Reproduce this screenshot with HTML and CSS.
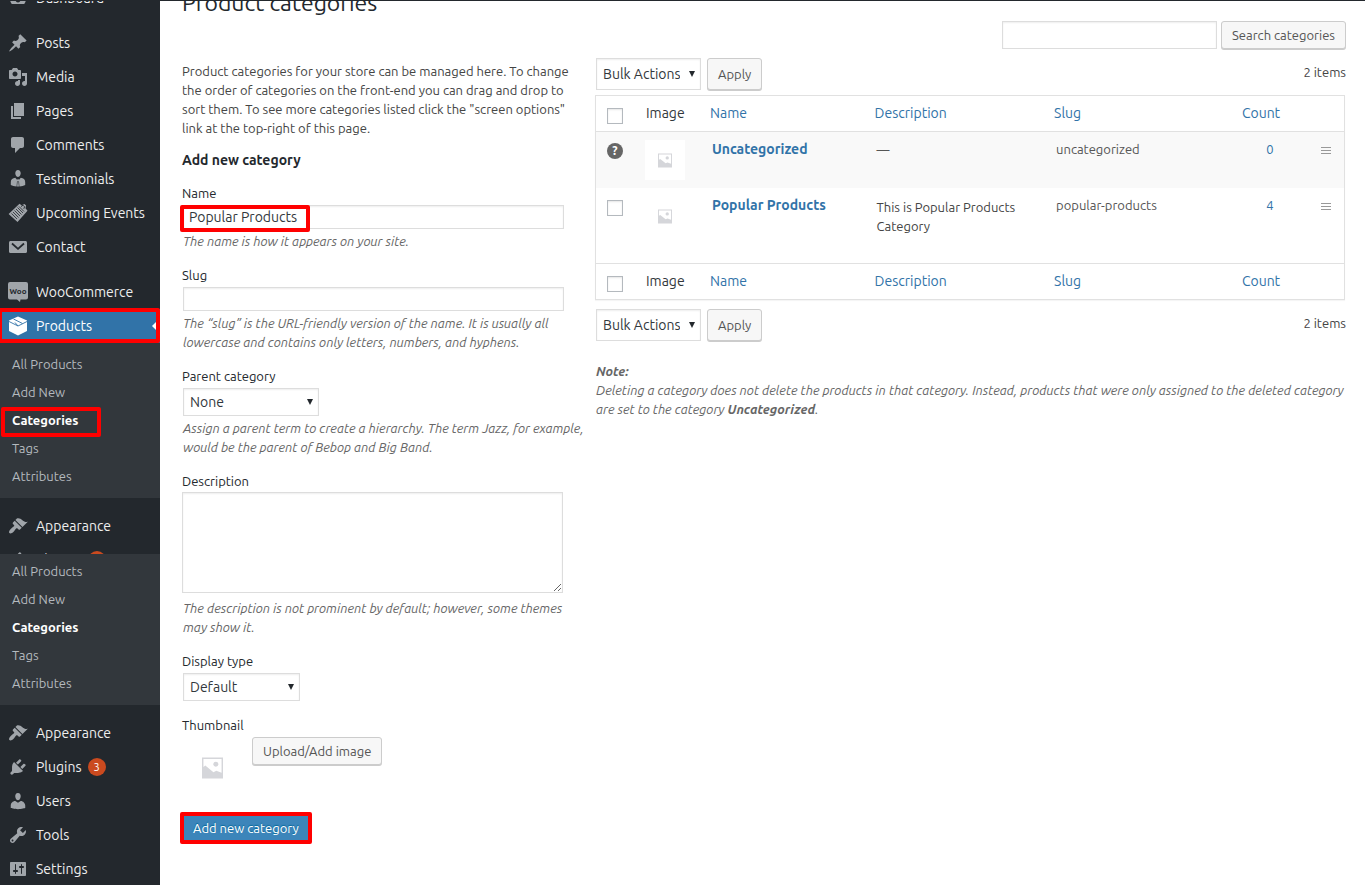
FILE: index.html
```html
<!DOCTYPE html>
<html lang="en">
<head>
  <meta charset="UTF-8" />
  <meta name="viewport" content="width=device-width, initial-scale=1.0"/>
  <title>Product categories</title>
  <link rel="stylesheet" href="styles.css">
</head>
<body>
  <!-- shared icons -->
  <svg class="sprite" width="0" height="0">
    <symbol id="i-dashboard" viewBox="0 0 20 20"><path d="M3.76 16h12.48c1.1-1.37 1.76-3.11 1.76-5 0-4.42-3.58-8-8-8s-8 3.58-8 8c0 1.89.66 3.63 1.76 5z"/><circle cx="10" cy="12" r="2.4" fill="#23282d"/></symbol>
    <symbol id="i-post" viewBox="0 0 20 20"><path d="M10.44 3.02l1.82-1.82 6.36 6.35-1.83 1.82c-1.05-.68-2.48-.57-3.41.36l-.75.75c-.92.93-1.04 2.35-.35 3.41l-1.83 1.82-2.41-2.41-2.8 2.79c-.42.42-3.38 2.71-3.8 2.29s1.86-3.39 2.28-3.81l2.79-2.79L4.1 9.36l1.83-1.82c1.05.69 2.48.57 3.4-.36l.75-.75c.93-.92 1.05-2.35.36-3.41z"/></symbol>
    <symbol id="i-media" viewBox="0 0 20 20"><path d="M13 11V4c0-.55-.45-1-1-1h-1.67L9 1H5L3.67 3H2c-.55 0-1 .45-1 1v7c0 .55.45 1 1 1h10c.55 0 1-.45 1-1zM7 4.5c1.38 0 2.5 1.12 2.5 2.5S8.38 9.5 7 9.5 4.5 8.38 4.5 7 5.62 4.5 7 4.5zM14 6h5v10.5c0 1.38-1.12 2.5-2.5 2.5S14 17.88 14 16.5s1.12-2.5 2.5-2.5c.17 0 .34.02.5.05V9h-3V6zm-4 8.05V13h2v3.5c0 1.38-1.12 2.5-2.5 2.5S7 17.88 7 16.5 8.12 14 9.5 14c.17 0 .34.02.5.05z"/></symbol>
    <symbol id="i-page" viewBox="0 0 20 20"><path d="M6 15V2h10v13H6zm-1 1h8v2H3V5h2v11z"/></symbol>
    <symbol id="i-comment" viewBox="0 0 20 20"><path d="M5 2h9c1.1 0 2 .9 2 2v7c0 1.1-.9 2-2 2h-2l-5 5v-5H5c-1.1 0-2-.9-2-2V4c0-1.1.9-2 2-2z"/></symbol>
    <symbol id="i-business" viewBox="0 0 20 20"><path d="M10 8C8 8 7.3 5.300 7.300 4.300 7.300 2.300 8.300 1 10 1s2.700 1.300 2.700 3.300C12.700 5.300 12 8 10 8zM7.300 8.800L9.200 11l.5-1h.7l.5 1 1.900-2.200c2.600.2 4.400 1.900 4.400 4.200v3c-1.500.9-3.500 1.400-5.800 1.500L11 12.500h-2l-.4 5c-2.300-.1-4.300-.6-5.800-1.500v-3c0-2.300 1.900-4 4.500-4.200zM9.500 13h1l.4 4.500H9.100z"/></symbol>
    <symbol id="i-ticket" viewBox="0 0 20 20"><path d="M.6 11L11.500.8l2 1.400 3-1.200 1.600 1.500-.6 2.700 2 2.500L9.500 19z"/><path d="M13 3.500l2-1.300 1.600 1.600-.8 2" stroke="#23282d" stroke-width=".9" fill="none"/><path d="M3.500 10.500l5.500 5.500M5 9l5.500 5.500M6.500 7.500L12 13M8 6l5.500 5.500M9.500 4.500L15 10M11 3.500l5 5" stroke="#23282d" stroke-width=".8" fill="none"/></symbol>
    <symbol id="i-email" viewBox="0 0 20 20"><path d="M2.500 4h15c.8 0 1.500.7 1.500 1.500v9.300c0 .7-.6 1.200-1.200 1.200H2.200c-.7 0-1.200-.5-1.200-1.200V5.500C1 4.700 1.700 4 2.500 4z"/><path d="M4 6.500l6 5.300 6-5.300" stroke="#23282d" stroke-width="1.800" fill="none"/></symbol>
    <symbol id="i-woo" viewBox="0 0 20 20"><path d="M2 0h16q2 0 2 2v13.500q0 2-2 2h-5.500l-.5 2.500-3-2.500H2q-2 0-2-2V2Q0 0 2 0z"/><text x="10" y="11.500" text-anchor="middle" class="woo-text">Woo</text></symbol>
    <symbol id="i-product" viewBox="0 0 20 20"><path d="M10 .5l9 4v10.500l-9 4.500-9-4.500V4.500z"/><path d="M1 5.500l9 4.500 9-4.500M5.500 3l9 4.500M10 10l-3-3.500" stroke="#3173a8" stroke-width=".9" fill="none"/></symbol>
    <symbol id="i-appearance" viewBox="0 0 20 20"><path d="M14.480 11.060L7.410 3.990l1.500-1.500c.5-.56 2.300-.47 3.510.32 1.210.8 1.430 1.280 2.910 2.100 1.180.64 2.450 1.260 4.450.85zm-.71.71L6.700 4.700 4.930 6.470c-.39.39-.39 1.020 0 1.410l1.060 1.060c.39.39.39 1.030 0 1.420-.6.6-1.430 1.110-2.210 1.690-.35.26-.7.53-1.010.84C1.430 14.230.4 16.080 1.400 17.070c.99 1 2.840-.03 4.180-1.360.31-.31.58-.66.85-1.020.57-.78 1.080-1.610 1.690-2.210.39-.39 1.020-.39 1.410 0l1.060 1.060c.39.39 1.020.39 1.410 0z"/></symbol>
    <symbol id="i-plugin" viewBox="0 0 20 20"><path d="M13.110 4.360L9.870 7.600 8 5.730l3.240-3.240c.35-.34 1.050-.2 1.560.32.52.51.66 1.210.31 1.550zm-8 1.770l.91-1.120 9.010 9.010-1.190.84c-.71.71-2.630 1.160-3.820 1.160H6.140L4.900 17.260c-.59.59-1.540.59-2.120 0-.59-.58-.59-1.530 0-2.120l1.240-1.240v-3.880c0-1.130.4-3.190 1.090-3.890zm7.260 3.970l3.240-3.240c.34-.35 1.040-.21 1.550.31.52.51.66 1.210.31 1.550l-3.240 3.250z"/></symbol>
    <symbol id="i-user" viewBox="0 0 20 20"><path d="M10 9.250c-2.270 0-2.730-3.440-2.730-3.440C7 4.020 7.820 2 9.970 2c2.160 0 2.980 2.020 2.710 3.810 0 0-.41 3.440-2.680 3.440zm0 2.570L12.720 10c2.390 0 4.520 2.330 4.520 4.530v2.490s-3.650 1.130-7.240 1.130c-3.650 0-7.240-1.130-7.240-1.130v-2.490c0-2.250 1.940-4.480 4.470-4.480z"/></symbol>
    <symbol id="i-tool" viewBox="0 0 20 20"><path d="M16.680 9.770c-1.340 1.340-3.300 1.670-4.950.99l-5.410 6.520c-.99.99-2.590.99-3.580 0s-.99-2.590 0-3.570l6.520-5.420c-.68-1.650-.35-3.610.99-4.950 1.280-1.280 3.120-1.620 4.720-1.060l-2.890 2.890 2.820 2.820 2.860-2.870c.53 1.580.18 3.390-1.080 4.650zM3.810 16.210c.4.39 1.040.39 1.430 0 .4-.4.4-1.040 0-1.430-.39-.4-1.030-.4-1.430 0-.39.39-.39 1.030 0 1.430z"/></symbol>
    <symbol id="i-setting" viewBox="0 0 20 20"><path d="M18 16V4c0-.55-.45-1-1-1H3c-.55 0-1 .45-1 1v12c0 .55.45 1 1 1h14c.55 0 1-.45 1-1zM8 11h1c.55 0 1 .45 1 1s-.45 1-1 1H8v1.500c0 .28-.22.5-.5.5s-.5-.22-.5-.5V13H6c-.55 0-1-.45-1-1s.45-1 1-1h1V5.500c0-.28.22-.5.5-.5s.5.22.5.5V11zm5-2h-1c-.55 0-1-.45-1-1s.45-1 1-1h1V5.500c0-.28.22-.5.5-.5s.5.22.5.5V7h1c.55 0 1 .45 1 1s-.45 1-1 1h-1v5.500c0 .28-.22.5-.5.5s-.5-.22-.5-.5V9z"/></symbol>
    <symbol id="i-image" viewBox="0 0 22 22"><path fill="#d5d6da" fill-rule="evenodd" d="M0 0h22v22H0zM1.500 1.500V10l2-1.500 5 4 3.500 3 3-1.500 5.500 2V1.500z"/><circle cx="14.500" cy="7" r="2.600" fill="#d5d6da"/></symbol>
    <symbol id="i-handle" viewBox="0 0 10 8"><path fill="#999" d="M0 0h10v1H0zM0 3h10v1H0zM0 6h10v1H0z"/></symbol>
  </svg>

  <div class="adminbar"></div>
  <div class="wrap">
    <nav class="sidebar">
      <ul class="menu menu-top">
        <li><a href="#"><svg><use href="#i-dashboard"/></svg>Dashboard</a></li>
        <li class="separator"></li>
        <li><a href="#"><svg><use href="#i-post"/></svg>Posts</a></li>
        <li><a href="#"><svg><use href="#i-media"/></svg>Media</a></li>
        <li><a href="#"><svg><use href="#i-page"/></svg>Pages</a></li>
        <li><a href="#"><svg><use href="#i-comment"/></svg>Comments</a></li>
        <li><a href="#"><svg><use href="#i-business"/></svg>Testimonials</a></li>
        <li><a href="#"><svg><use href="#i-ticket"/></svg>Upcoming Events</a></li>
        <li><a href="#"><svg><use href="#i-email"/></svg>Contact</a></li>
        <li class="separator"></li>
        <li><a href="#"><svg><use href="#i-woo"/></svg>WooCommerce</a></li>
        <li class="current"><a href="#"><svg><use href="#i-product"/></svg>Products</a><span class="mark mark-menu"></span></li>
      </ul>
      <ul class="submenu">
        <li><a href="#">All Products</a></li>
        <li><a href="#">Add New</a></li>
        <li class="active"><a href="#">Categories</a><span class="mark mark-sub"></span></li>
        <li><a href="#">Tags</a></li>
        <li><a href="#">Attributes</a></li>
      </ul>
      <ul class="menu">
        <li class="separator"></li>
        <li><a href="#"><svg><use href="#i-appearance"/></svg>Appearance</a></li>
        <li class="cut"><a href="#"><svg><use href="#i-plugin"/></svg>Plugins <span class="count">3</span></a></li>
      </ul>
      <ul class="submenu submenu-second">
        <li><a href="#">All Products</a></li>
        <li><a href="#">Add New</a></li>
        <li class="active"><a href="#">Categories</a></li>
        <li><a href="#">Tags</a></li>
        <li><a href="#">Attributes</a></li>
      </ul>
      <ul class="menu">
        <li class="separator"></li>
        <li><a href="#"><svg><use href="#i-appearance"/></svg>Appearance</a></li>
        <li><a href="#"><svg><use href="#i-plugin"/></svg>Plugins <span class="count">3</span></a></li>
        <li><a href="#"><svg><use href="#i-user"/></svg>Users</a></li>
        <li><a href="#"><svg><use href="#i-tool"/></svg>Tools</a></li>
        <li><a href="#"><svg><use href="#i-setting"/></svg>Settings</a></li>
      </ul>
    </nav>

    <main class="content">
      <h1>Product categories</h1>
      <form class="search">
        <input type="search" aria-label="Search categories">
        <button type="button" class="button">Search categories</button>
      </form>

      <div class="columns">
        <section class="col-left">
          <p class="intro">Product categories for your store can be managed here. To change<br>the order of categories on the front-end you can drag and drop to<br>sort them. To see more categories listed click the "screen options"<br>link at the top-right of this page.</p>
          <h2>Add new category</h2>
          <form>
            <div class="field">
              <label for="name">Name</label>
              <div class="holder">
                <input type="text" id="name" value="Popular Products">
                <span class="mark mark-name"></span>
              </div>
              <p class="help">The name is how it appears on your site.</p>
            </div>
            <div class="field">
              <label for="slug">Slug</label>
              <input type="text" id="slug">
              <p class="help">The “slug” is the URL-friendly version of the name. It is usually all<br>lowercase and contains only letters, numbers, and hyphens.</p>
            </div>
            <div class="field">
              <label for="parent">Parent category</label>
              <select id="parent" class="select-parent"><option>None</option></select>
              <p class="help">Assign a parent term to create a hierarchy. The term Jazz, for example,<br>would be the parent of Bebop and Big Band.</p>
            </div>
            <div class="field">
              <label for="description">Description</label>
              <textarea id="description"></textarea>
              <p class="help">The description is not prominent by default; however, some themes<br>may show it.</p>
            </div>
            <div class="field">
              <label for="display">Display type</label>
              <select id="display" class="select-display"><option>Default</option></select>
            </div>
            <div class="field">
              <label for="upload">Thumbnail</label>
              <div class="thumbnail">
                <div class="thumb-box"><svg><use href="#i-image"/></svg></div>
                <button type="button" class="button" id="upload">Upload/Add image</button>
              </div>
            </div>
            <div class="submit">
              <button type="button" class="button-primary">Add new category</button>
              <span class="mark mark-submit"></span>
            </div>
          </form>
        </section>

        <section class="col-right">
          <div class="tablenav">
            <select aria-label="Bulk action"><option>Bulk Actions</option></select>
            <button type="button" class="button">Apply</button>
            <span class="items">2 items</span>
          </div>
          <table class="list">
            <thead>
              <tr>
                <th class="c-check"><input type="checkbox" aria-label="Select all"></th>
                <th class="c-image">Image</th>
                <th class="c-name"><a href="#">Name</a></th>
                <th class="c-desc"><a href="#">Description</a></th>
                <th><a href="#">Slug</a></th>
                <th class="c-count"><a href="#">Count</a></th>
                <th class="c-handle"></th>
              </tr>
            </thead>
            <tbody>
              <tr class="alt">
                <td class="c-check"><span class="tip">?</span></td>
                <td class="c-image"><div class="thumb"><svg><use href="#i-image"/></svg></div></td>
                <td><a href="#" class="row-title">Uncategorized</a></td>
                <td>—</td>
                <td>uncategorized</td>
                <td class="c-count"><a href="#">0</a></td>
                <td class="c-handle"><svg><use href="#i-handle"/></svg></td>
              </tr>
              <tr>
                <td class="c-check"><input type="checkbox" aria-label="Select Popular Products"></td>
                <td class="c-image"><div class="thumb"><svg><use href="#i-image"/></svg></div></td>
                <td><a href="#" class="row-title">Popular Products</a></td>
                <td><p>This is Popular Products Category</p></td>
                <td>popular-products</td>
                <td class="c-count"><a href="#">4</a></td>
                <td class="c-handle"><svg><use href="#i-handle"/></svg></td>
              </tr>
            </tbody>
            <tfoot>
              <tr>
                <th class="c-check"><input type="checkbox" aria-label="Select all"></th>
                <th class="c-image">Image</th>
                <th><a href="#">Name</a></th>
                <th><a href="#">Description</a></th>
                <th><a href="#">Slug</a></th>
                <th class="c-count"><a href="#">Count</a></th>
                <th class="c-handle"></th>
              </tr>
            </tfoot>
          </table>
          <div class="tablenav tablenav-bottom">
            <select aria-label="Bulk action"><option>Bulk Actions</option></select>
            <button type="button" class="button">Apply</button>
            <span class="items">2 items</span>
          </div>
          <p class="note"><strong>Note:</strong><br>Deleting a category does not delete the products in that category. Instead, products that were only assigned to the deleted category<br>are set to the category <strong>Uncategorized</strong>.</p>
        </section>
      </div>
    </main>
  </div>
</body>
</html>
```
FILE: styles.css
```css
* {
  box-sizing: border-box;
}
body {
  font-family: Ubuntu, "Open Sans", sans-serif;
  font-size: 13px;
  line-height: 19px;
  color: #444;
  background: #fff;
  margin: 0;
}
h1, h2, p, ul {
  margin: 0;
  padding: 0;
}
ul {
  list-style: none;
}
a {
  color: #3173a8;
  text-decoration: none;
}
input, select, textarea, button {
  font-family: inherit;
  margin: 0;
}
.sprite {
  position: absolute;
}
.adminbar {
  height: 1px;
  background: #23282d;
}
.wrap {
  display: flex;
  height: calc(100vh - 1px);
  overflow: hidden;
}

/* sidebar */
.sidebar {
  flex: 0 0 160px;
  background: #23282d;
  overflow: hidden;
}
.menu-top {
  margin-top: -20px;
}
.menu li {
  position: relative;
  height: 34px;
}
.menu .separator {
  height: 11px;
}
.menu .cut {
  height: 11px;
  overflow: hidden;
}
.menu a {
  display: flex;
  align-items: center;
  gap: 8px;
  height: 34px;
  padding-left: 8px;
  font-size: 14px;
  color: #eee;
  white-space: nowrap;
}
.menu svg {
  width: 20px;
  height: 20px;
  flex: none;
  fill: #a0a5aa;
}
.woo-text {
  font-size: 8px;
  font-weight: bold;
  fill: #23282d;
}
.menu .current a {
  background: #3173a8;
  color: #fff;
}
.menu .current svg {
  fill: #fff;
}
.menu .current::after {
  content: "";
  position: absolute;
  right: 0;
  top: 9px;
  border: 8px solid transparent;
  border-right-color: #fff;
}
.count {
  width: 18px;
  height: 18px;
  margin-left: -2px;
  border-radius: 9px;
  background: #ca4a1f;
  color: #fff;
  font-size: 11px;
  line-height: 18px;
  text-align: center;
}
.submenu {
  background: #32373c;
  padding: 7px 0 8px;
}
.submenu-second {
  padding-top: 3px;
}
.submenu li {
  position: relative;
}
.submenu a {
  display: block;
  padding-left: 12px;
  line-height: 28px;
  color: #b4b9be;
}
.submenu .active a {
  color: #fff;
  font-weight: bold;
}

/* red highlight frames */
.mark {
  position: absolute;
  z-index: 1;
  border: 4px solid #f00;
  border-radius: 2px;
  pointer-events: none;
}
.mark-menu {
  inset: -1px 0 0 -2px;
}
.mark-sub {
  left: 1px;
  top: 1px;
  width: 100px;
  height: 30px;
}
.mark-name {
  left: -2px;
  top: 0;
  width: 130px;
  height: 27px;
}
.mark-submit {
  inset: -4px;
}

/* content */
.content {
  flex: 1;
  min-width: 0;
  padding: 0 20px 0 22px;
}
h1 {
  margin-top: -13px;
  font-size: 23px;
  font-weight: normal;
  line-height: 30px;
  color: #23282d;
}
.search {
  display: flex;
  justify-content: flex-end;
  gap: 4px;
  margin: 3px -1px 8px 0;
}
.search input {
  width: 215px;
  height: 28px;
}
input[type="text"], input[type="search"], textarea, select {
  border: 1px solid #ddd;
  border-radius: 0;
  background: #fff;
  box-shadow: inset 0 1px 2px rgba(0, 0, 0, 0.07);
  color: #32373c;
  font-size: 14px;
}
select {
  appearance: none;
  height: 28px;
  padding: 0 20px 0 6px;
  background: #fff url("data:image/svg+xml,%3Csvg xmlns='http://www.w3.org/2000/svg' width='6' height='6'%3E%3Cpath d='M0 0h6L3 6z' fill='%2323282d'/%3E%3C/svg%3E") no-repeat right 5px center;
}
input[type="checkbox"] {
  appearance: none;
  display: block;
  width: 16px;
  height: 16px;
  border: 1px solid #b4b9be;
  background: #fff;
  box-shadow: inset 0 1px 2px rgba(0, 0, 0, 0.1);
}
.button {
  height: 28px;
  padding: 0 10px;
  border: 1px solid #ccc;
  border-radius: 3px;
  background: #f7f7f7;
  box-shadow: 0 1px 0 #ccc;
  color: #555;
  font-size: 13px;
  white-space: nowrap;
}
.columns {
  display: grid;
  grid-template-columns: 401px 1fr;
  gap: 13px;
}

/* add form */
.col-left {
  padding-top: 5px;
  white-space: nowrap;
}
h2 {
  margin: 13px 0 14px;
  font-size: 14px;
  line-height: 19px;
  color: #23282d;
}
.field {
  margin-bottom: 15px;
}
.field label {
  display: block;
  margin-bottom: 2px;
  color: #23282d;
}
.holder {
  position: relative;
}
.field input, .field select {
  display: block;
  margin-left: 1px;
}
.field input {
  width: 95%;
  height: 24px;
  padding: 0 5px;
}
.field textarea {
  display: block;
  width: 95%;
  height: 101px;
  margin: -1px 0 6px;
}
.field .select-parent {
  width: 136px;
}
.field .select-display {
  width: 117px;
}
.help {
  margin: 3px 0 0 1px;
  color: #666;
  font-style: italic;
}
.thumbnail {
  display: flex;
  gap: 10px;
}
.thumb-box {
  width: 60px;
  height: 60px;
  padding: 20px 0 0 20px;
}
.thumb-box svg {
  display: block;
  width: 21px;
  height: 22px;
}
.submit {
  position: relative;
  display: inline-block;
  margin: 4px 0 0 2px;
}
.button-primary {
  display: block;
  height: 24px;
  padding: 0 9px;
  border: 0;
  background: #3c85ba;
  color: #fff;
  font-size: 13px;
  text-shadow: 0 -1px 1px #006799;
}

/* list */
.col-right {
  padding-top: 1px;
}
.tablenav {
  display: flex;
  align-items: flex-start;
  gap: 6px;
  height: 37px;
}
.tablenav select {
  width: 105px;
  height: 32px;
}
.tablenav .button {
  height: 32px;
}
.items {
  margin: 5px -1px 0 auto;
}
.list {
  width: calc(100% + 1px);
  margin-left: -1px;
  table-layout: fixed;
  border: 1px solid #e1e1e1;
  border-spacing: 0;
  box-shadow: 0 1px 1px rgba(0, 0, 0, 0.04);
}
.list th {
  height: 36px;
  padding: 0 8px;
  font-size: 14px;
  font-weight: normal;
  text-align: left;
  color: #32373c;
}
.list thead th {
  border-bottom: 1px solid #e1e1e1;
}
.list tfoot th {
  border-top: 1px solid #e1e1e1;
}
.list td {
  height: 56px;
  padding: 8px 10px;
  vertical-align: top;
  color: #555;
}
.list tbody tr:last-child td {
  height: 75px;
}
.list td p {
  margin-top: 2px;
  color: #444;
}
.alt {
  background: #f9f9f9;
}
.list .c-check {
  width: 40px;
  padding-left: 11px;
}
.list th.c-image {
  width: 66px;
  padding: 0 0 0 10px;
}
.list td.c-image {
  padding: 8px 0 0 9px;
}
.c-name {
  width: 22%;
}
.c-desc {
  width: 24%;
}
.list th.c-count {
  width: 82px;
  text-align: center;
}
.list td.c-count {
  padding-left: 28px;
  text-align: center;
}
.list .c-handle {
  width: 42px;
  padding-left: 19px;
}
.list .c-handle svg {
  display: block;
  width: 10px;
  height: 8px;
  margin-top: 7px;
}
.list input {
  margin-top: 4px;
}
.tip {
  display: block;
  width: 16px;
  height: 16px;
  margin-top: 3px;
  border-radius: 8px;
  background: #666;
  color: #fff;
  font-size: 12px;
  font-weight: bold;
  line-height: 16px;
  text-align: center;
}
.thumb {
  width: 40px;
  height: 40px;
  padding: 13px;
  background: #fff;
}
.thumb svg {
  display: block;
  width: 14px;
  height: 15px;
}
.row-title {
  font-size: 14px;
  font-weight: bold;
}
.tablenav-bottom {
  margin-top: 9px;
}
.note {
  margin-top: 16px;
  color: #666;
  font-style: italic;
  white-space: nowrap;
}
```
